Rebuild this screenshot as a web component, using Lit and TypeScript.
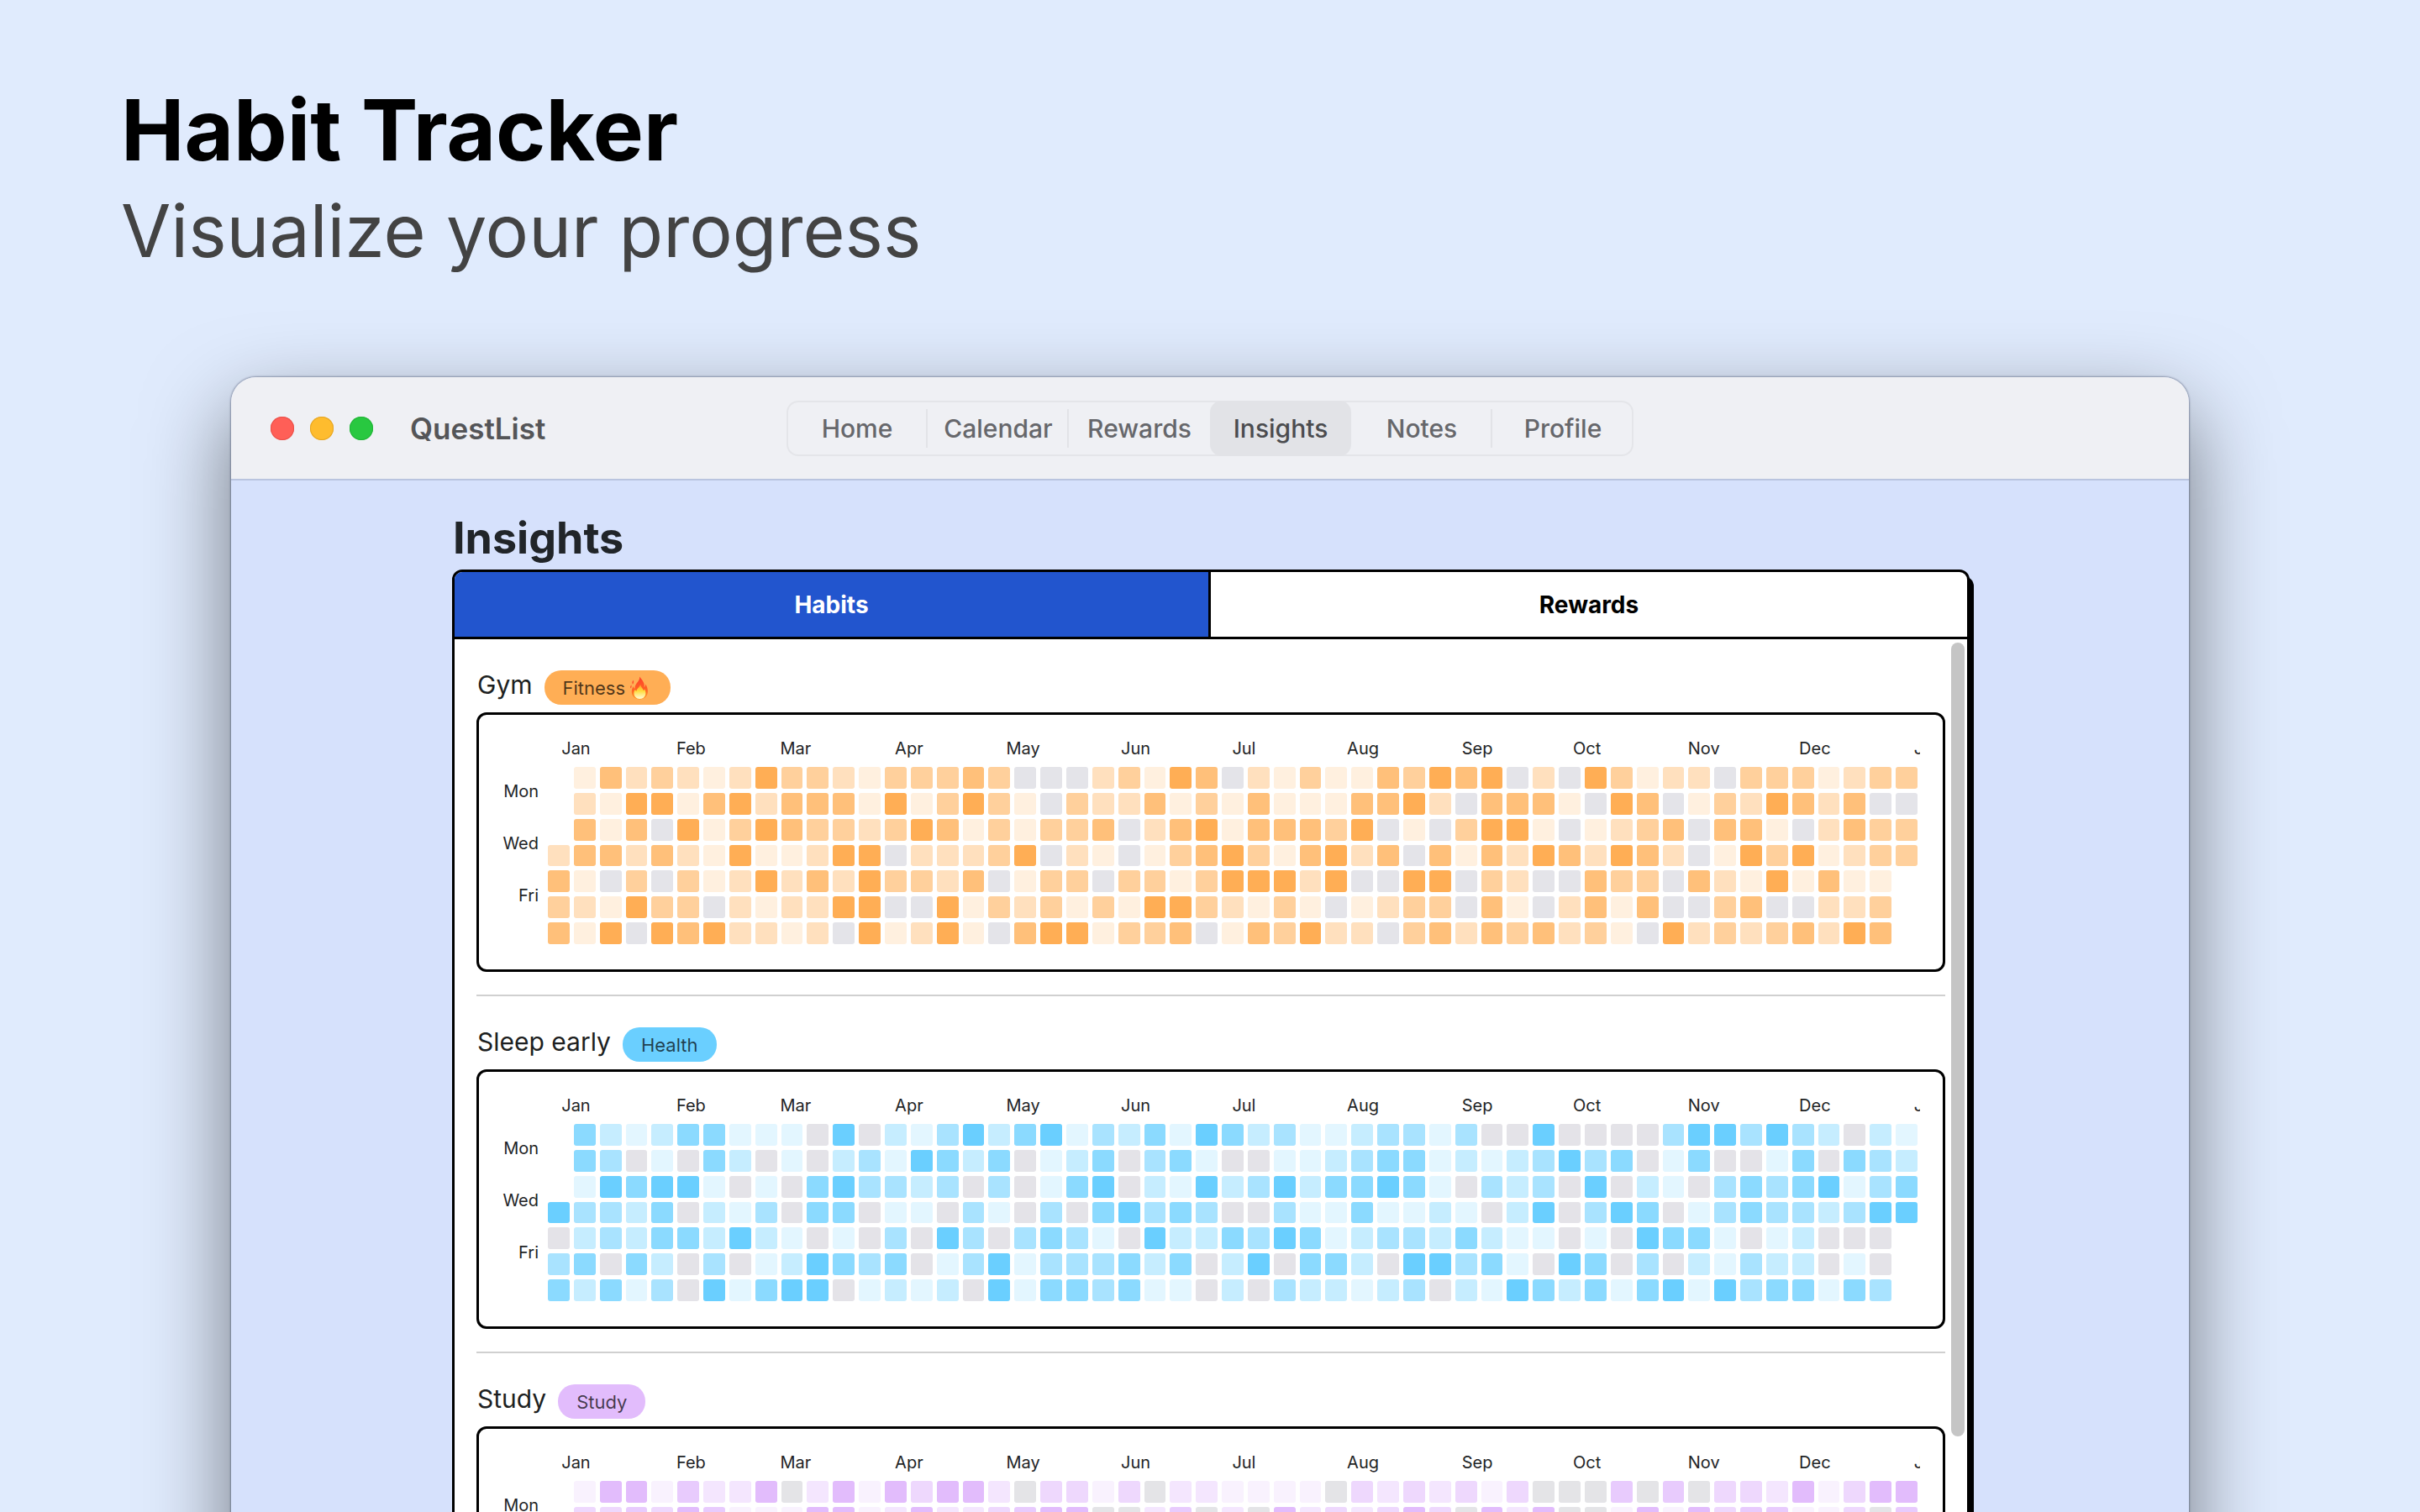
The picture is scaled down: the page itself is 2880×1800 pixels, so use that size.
import { LitElement, html, css, svg } from "lit";
import { customElement, property, state } from "lit/decorators.js";
import { classMap } from "lit/directives/class-map.js";

interface Habit {
  name: string;
  tag: string;
  tone: "orange" | "blue" | "violet";
  flame?: boolean;
  /** One string per weekday, one character per week: 0-5 is the level, "." is outside the year. */
  days: string[];
}

const HABITS: Habit[] = [
  {
    name: "Gym",
    tag: "Fitness",
    tone: "orange",
    flame: true,
    days: [
      ".142321253321333" + "4300023154021311435" + "450205312203331233",
      ".215514524441513" + "5310322413141114452" + "044410540132542400",
      ".414051354332354" + "1313340245144435010" + "355101234044102433",
      "2442421511255022" + "2350210134531452404" + "142542542015351233",
      "4103031252425332" + "4013303313555250055" + "03200433042151411.",
      "3215330212255005" + "1323131553213101233" + "04102414003400223.",
      "4150545221205125" + "1045513340143522034" + "24342310523234254.",
    ],
  },
  {
    name: "Sleep early",
    tag: "Health",
    tone: "blue",
    days: [
      ".421244111050213" + "5245132415423112331" + "300500003553532021",
      ".430104201023154" + "2401240341001123441" + "212353401400140432",
      ".154551010453323" + "0301450215235244541" + "032305021034345134",
      "5332402130440110" + "3103045343003114112" + "102503540134332355",
      "0232442521010305" + "3034310522435412332" + "42110105441012000.",
      "3404203012543401" + "3513334240250442055" + "34105403021322010.",
      "4241305145501212" + "0514434110203221230" + "21542414515344143.",
    ],
  },
  {
    name: "Study",
    tag: "Study",
    tone: "violet",
    days: [
      ".1551422502515355203313022" + "111103232313000404033251355",
      ".3343541115512522345500240" + "205232353052500151534411304",
    ],
  },
];

const MONTHS = ["Jan", "Feb", "Mar", "Apr", "May", "Jun", "Jul", "Aug", "Sep", "Oct", "Nov", "Dec", "Jan"];
const SECTIONS = ["Home", "Calendar", "Rewards", "Insights", "Notes", "Profile"];

@customElement("year-heatmap")
export class YearHeatmap extends LitElement {
  @property({ attribute: false }) days: string[] = [];
  @property() tone = "orange";

  static styles = css`
    :host {
      display: block;
    }
    .chart {
      display: grid;
      grid-template-columns: 71px minmax(0, 1fr);
      column-gap: 11px;
      border: 3px solid #000;
      border-radius: 12px;
      background: #fff;
      padding: 28px 30px 30px 0;
      color: #222426;
      font-size: 20px;
      line-height: 24px;
    }
    .months {
      grid-column: 2;
      margin-right: -3px;
      overflow: hidden;
      padding-bottom: 10px;
    }
    .track {
      display: grid;
      /* each column is as wide as its month; the first holds the three days before it */
      grid-template-columns: 3fr 31fr 28fr 31fr 30fr 31fr 30fr 31fr 31fr 30fr 31fr 30fr 31fr 3fr;
      margin-right: -3px;
    }
    .month {
      min-width: 0;
      padding-left: 3px;
      white-space: nowrap;
    }
    .month:last-child {
      width: 0;
    }
    .month:first-child {
      grid-column: 2;
    }
    .weekdays {
      display: grid;
      grid-template-rows: repeat(3, 57px);
      row-gap: 5px;
      text-align: right;
    }
    .weekday {
      display: flex;
      align-items: center;
      justify-content: flex-end;
    }
    .cells {
      display: grid;
      grid-template-columns: repeat(53, minmax(0, 1fr));
      grid-template-rows: repeat(7, minmax(0, 1fr));
      gap: 5px;
      height: 211px;
    }
    .cell {
      border-radius: 3px;
    }
    .orange {
      --full: #ffae55;
      --none: #e4e4e9;
    }
    .blue {
      --full: #6acfff;
      --none: #e4e3e8;
    }
    .violet {
      --full: #e2bcfc;
      --none: #e4e4e7;
    }
    .l0 {
      background: var(--none);
    }
    .l1 {
      background: color-mix(in srgb, var(--full) 19%, #fff);
    }
    .l2 {
      background: color-mix(in srgb, var(--full) 38%, #fff);
    }
    .l3 {
      background: color-mix(in srgb, var(--full) 58%, #fff);
    }
    .l4 {
      background: color-mix(in srgb, var(--full) 78%, #fff);
    }
    .l5 {
      background: var(--full);
    }
  `;

  render() {
    return html`
      <div class="chart ${this.tone}">
        <div class="months">
          <div class="track">${MONTHS.map((m) => html`<span class="month">${m}</span>`)}</div>
        </div>
        <div class="weekdays">
          ${["Mon", "Wed", "Fri"].map((d) => html`<span class="weekday">${d}</span>`)}
        </div>
        <div class="cells">
          ${this.days.map((row) =>
            [...row].map((c) => html`<span class="cell ${c === "." ? "" : "l" + c}"></span>`),
          )}
        </div>
      </div>
    `;
  }
}

@customElement("habit-section")
export class HabitSection extends LitElement {
  @property({ attribute: false }) habit!: Habit;

  static styles = css`
    :host {
      display: block;
      border-bottom: 2px solid #d0d0d0;
      padding: 37px 0 27px;
    }
    .head {
      display: flex;
      align-items: flex-end;
      gap: 14px;
      margin-bottom: 9px;
      padding-left: 1px;
    }
    .name {
      margin: 0;
      padding-bottom: 8px;
      font-size: 30px;
      line-height: 32px;
      font-weight: 400;
      color: #1d1f21;
    }
    .tag {
      display: flex;
      align-items: center;
      height: 41px;
      padding: 0 22px;
      border-radius: 20px;
      font-size: 22px;
      color: rgba(0, 0, 0, 0.7);
    }
    .orange {
      background: #ffae55;
    }
    .blue {
      background: #6acfff;
    }
    .violet {
      background: #e2bcfc;
    }
    .flame {
      width: 32px;
      height: 28px;
    }
  `;

  private flame() {
    return svg`
      <svg class="flame" viewBox="-5 0 32 28" aria-hidden="true">
        <defs>
          <linearGradient id="outer" x1="0" y1="0" x2="0" y2="1">
            <stop offset="0" stop-color="#ff3f2a" />
            <stop offset="0.6" stop-color="#ff6424" />
            <stop offset="1" stop-color="#ffa024" />
          </linearGradient>
          <linearGradient id="inner" x1="0" y1="0" x2="0" y2="1">
            <stop offset="0" stop-color="#ff9a2a" />
            <stop offset="0.45" stop-color="#ffdc3c" />
            <stop offset="1" stop-color="#fffbd8" />
          </linearGradient>
        </defs>
        <path fill="url(#outer)" d="M12.200 0.600C13.600 3 16.600 5.600 17.500 9c0.400 1.500 0.400 2.900 0.100 4.300 1.100-0.900 1.600-2.100 1.600-3.700 1.800 2.600 2.700 5.500 2.700 8.500 0 5.700-3.900 9.400-9.600 9.400S2.800 24 2.800 18.500c0-2.700 0.800-4.700 1.900-6.600 0.300 1.500 0.800 2.500 1.800 3.100-0.300-3.300 1.300-5.500 3.100-7.700C11.400 5.200 12.300 3 12.200 0.600z" />
        <path fill="#ff4a2a" d="M4.600 4.800c0.900 1.700 0.600 3.300-0.600 4.900C3 8.200 3.300 6.400 4.600 4.800zM2.300 10.500c0.600 1.500 0.200 2.900-0.700 4.100C0.800 13.200 1.100 11.700 2.300 10.500z" />
        <path fill="url(#inner)" d="M13.200 9.800c0.200 2.900 2.700 4.700 3.800 7.400 0.600-0.500 1-1.100 1.100-1.900 0.900 1.500 1.300 3 1.300 4.600 0 4-2.800 7-7 7s-6.900-2.800-6.900-6.700c0-1.800 0.600-3.200 1.400-4.400 0.300 1 0.700 1.700 1.400 2.200C8.600 15.200 12.100 13.300 13.200 9.800z" />
      </svg>`;
  }

  render() {
    const h = this.habit;
    return html`
      <div class="head">
        <h3 class="name">${h.name}</h3>
        <span class="tag ${h.tone}">${h.tag}${h.flame ? this.flame() : ""}</span>
      </div>
      <year-heatmap .days=${h.days} tone=${h.tone}></year-heatmap>
    `;
  }
}

@customElement("app-root")
export class AppRoot extends LitElement {
  @state() private section = "Insights";
  @state() private tab = "Habits";

  static styles = css`
    :host {
      display: flex;
      flex-direction: column;
      height: 100vh;
      overflow: hidden;
      background: #e0ebfd;
      font-family: Inter, "Liberation Sans", sans-serif;
    }
    button {
      margin: 0;
      padding: 0;
      border: 0;
      background: none;
      color: inherit;
      font: inherit;
      cursor: pointer;
    }
    .hero {
      flex: none;
      height: 449px;
      box-sizing: border-box;
      padding: 94px 144px 0;
    }
    .headline {
      margin: 0;
      font-size: 101px;
      line-height: 120px;
      font-weight: 700;
      color: #000;
    }
    .subline {
      margin: 0;
      font-size: 86px;
      line-height: 122px;
      color: #434343;
    }
    .window {
      flex: 1 0 auto;
      margin: 0 275px;
      border-radius: 30px 30px 0 0;
      background: #d6e1fc;
      box-shadow:
        0 0 2px 1px rgba(40, 50, 80, 0.4),
        0 40px 100px rgba(0, 0, 0, 0.5);
    }
    .toolbar {
      display: grid;
      grid-template-columns: 1fr auto 1fr;
      align-items: center;
      height: 123px;
      box-sizing: border-box;
      padding: 0 47px;
      border-radius: 30px 30px 0 0;
      border-bottom: 2px solid #b9c4df;
      background: #eff0f4;
    }
    .lead {
      display: flex;
      align-items: center;
    }
    .lights {
      display: flex;
      gap: 19px;
      margin-right: 44px;
    }
    .light {
      width: 28px;
      height: 28px;
      border-radius: 50%;
    }
    .close {
      background: #ff5f57;
      box-shadow: inset 0 0 0 1px #e9514a;
    }
    .shrink {
      background: #febc2e;
      box-shadow: inset 0 0 0 1px #e5a524;
    }
    .grow {
      background: #28c840;
      box-shadow: inset 0 0 0 1px #22b437;
    }
    .app-name {
      font-size: 35px;
      line-height: 44px;
      font-weight: 600;
      color: #545558;
    }
    .sections {
      display: grid;
      grid-template-columns: repeat(6, 168px);
      height: 66px;
      border-radius: 14px;
      box-shadow: inset 0 0 0 2px #e4e5e9;
      color: #66676b;
      font-size: 30px;
      font-weight: 500;
    }
    .section {
      display: flex;
      align-items: center;
      justify-content: center;
    }
    .section::before {
      content: "";
      width: 2px;
      margin-right: auto;
    }
    .section::after {
      content: "";
      width: 2px;
      height: 46px;
      margin-left: auto;
      background: #e2e3e7;
    }
    .section:last-child::after,
    .section.on::after,
    .section:has(+ .on)::after {
      background: none;
    }
    .section.on {
      border-radius: 14px;
      background: #e2e3e7;
      color: #4b4c4f;
    }
    .content {
      padding: 36px 261px 0 263px;
    }
    .title {
      margin: 0 0 4px 1px;
      font-size: 52px;
      line-height: 66px;
      font-weight: 700;
      color: #212529;
    }
    .card {
      position: relative;
      border: 3px solid #000;
      border-radius: 12px;
      background: #fff;
      box-shadow: 5px 8px 0 #000;
    }
    .tabs {
      display: grid;
      grid-template-columns: 1fr 1fr;
      height: 80px;
      box-sizing: border-box;
      border-bottom: 3px solid #000;
      font-size: 28px;
      font-weight: 700;
    }
    .tab {
      color: #000;
      border-radius: 0 9px 0 0;
    }
    .tab:first-child {
      border-right: 3px solid #000;
      border-radius: 9px 0 0 0;
    }
    .tab.on {
      background: #2255ce;
      color: #fff;
    }
    .list {
      padding: 0 26px;
    }
    .thumb {
      position: absolute;
      top: 84px;
      right: 3px;
      width: 16px;
      height: 945px;
      border-radius: 8px;
      background: #c5c5c5;
    }
  `;

  render() {
    return html`
      <header class="hero">
        <h1 class="headline">Habit Tracker</h1>
        <p class="subline">Visualize your progress</p>
      </header>
      <main class="window">
        <div class="toolbar">
          <div class="lead">
            <div class="lights">
              <button class="light close" aria-label="Close"></button>
              <button class="light shrink" aria-label="Minimize"></button>
              <button class="light grow" aria-label="Zoom"></button>
            </div>
            <span class="app-name">QuestList</span>
          </div>
          <nav class="sections">
            ${SECTIONS.map(
              (s) => html`<button
                class=${classMap({ section: true, on: s === this.section })}
                @click=${() => (this.section = s)}
              >${s}</button>`,
            )}
          </nav>
        </div>
        <div class="content">
          <h2 class="title">Insights</h2>
          <div class="card">
            <div class="tabs" role="tablist">
              ${["Habits", "Rewards"].map(
                (t) => html`<button
                  role="tab"
                  aria-selected=${t === this.tab}
                  class=${classMap({ tab: true, on: t === this.tab })}
                  @click=${() => (this.tab = t)}
                >${t}</button>`,
              )}
            </div>
            <div class="list">
              ${HABITS.map((h) => html`<habit-section .habit=${h}></habit-section>`)}
            </div>
            <div class="thumb"></div>
          </div>
        </div>
      </main>
    `;
  }
}
